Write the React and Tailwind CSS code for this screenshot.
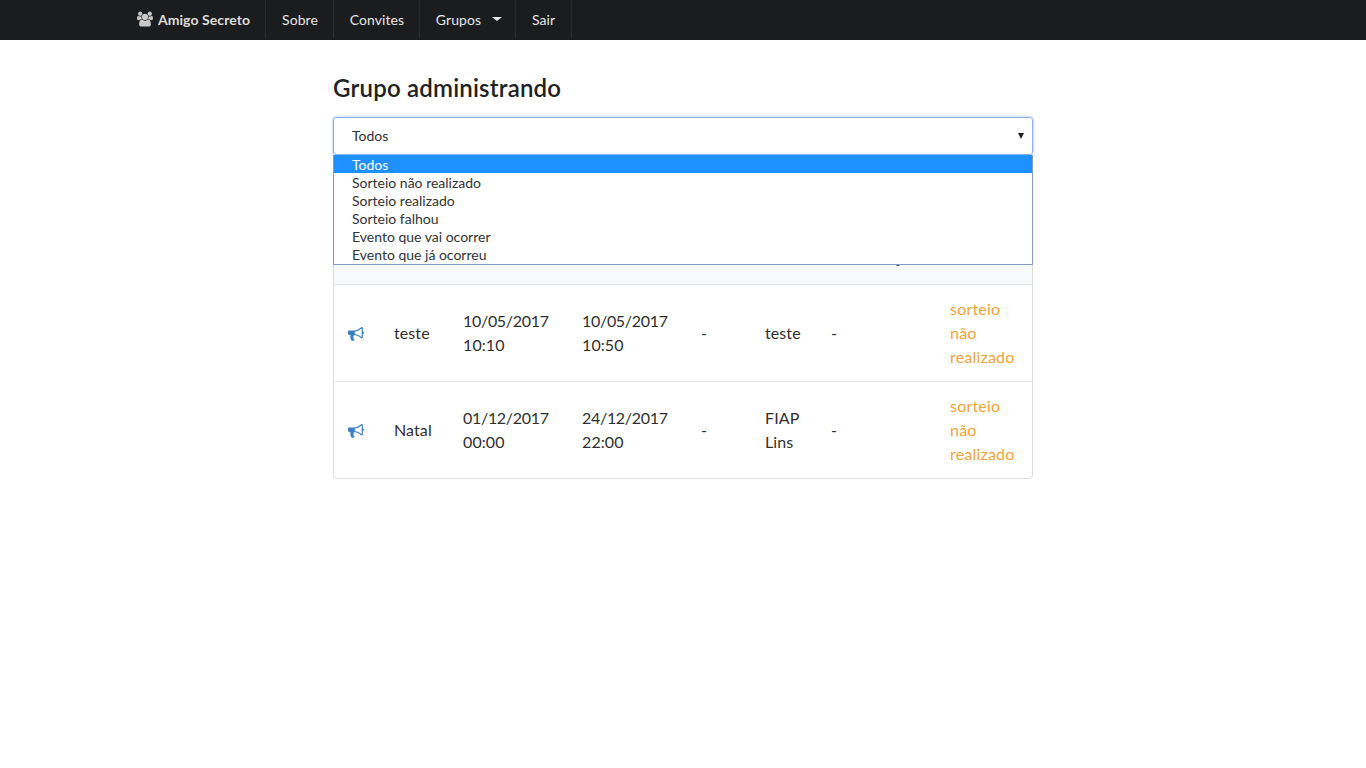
const navItems = [
    { label: 'Sobre', className: 'w-[68px] pl-[1px]' },
    { label: 'Convites', className: 'w-[86px] pl-[1px]' },
    { label: 'Grupos', className: 'w-[96px] pl-[3px]', caret: true },
    { label: 'Sair', className: 'w-[56px]' }
];

const options = [
    'Todos',
    'Sorteio não realizado',
    'Sorteio realizado',
    'Sorteio falhou',
    'Evento que vai ocorrer',
    'Evento que já ocorreu'
];

const grupos = [
    { nome: 'teste', inicio: ['10/05/2017', '10:10'], fim: ['10/05/2017', '10:50'], local: 'teste' },
    { nome: 'Natal', inicio: ['01/12/2017', '00:00'], fim: ['24/12/2017', '22:00'], local: 'FIAP Lins' }
];

function UsersIcon({ className }) {
    return (
        <svg viewBox="0 0 1920 1792" fill="currentColor" className={className}>
            <path d="M593 896q-162 5-265 128h-134q-82 0-138-40.5t-56-118.5q0-353 124-353 6 0 43.5 21t97.5 42.5 119 21.5q67 0 133-23-5 37-5 66 0 139 81 256zm1071 637q0 120-73 189.5t-194 69.5h-874q-121 0-194-69.5t-73-189.5q0-53 3.5-103.5t14-109 26.5-108.5 43-97.5 62-81 85.5-53.5 111.5-20q10 0 43 21.5t73 48 107 48 135 21.5 135-21.5 107-48 73-48 43-21.5q61 0 111.5 20t85.5 53.5 62 81 43 97.5 26.5 108.5 14 109 3.5 103.5zm-1024-1277q0 106-75 181t-181 75-181-75-75-181 75-181 181-75 181 75 75 181zm704 384q0 159-112.5 271.5t-271.5 112.5-271.5-112.5-112.5-271.5 112.5-271.5 271.5-112.5 271.5 112.5 112.5 271.5zm576 225q0 78-56 118.5t-138 40.5h-134q-103-123-265-128 81-117 81-256 0-29-5-66 66 23 133 23 59 0 119-21.5t97.5-42.5 43.5-21q124 0 124 353zm-128-609q0 106-75 181t-181 75-181-75-75-181 75-181 181-75 181 75 75 181z" />
        </svg>
    );
}

function BullhornIcon({ className }) {
    return (
        <svg viewBox="0 0 1792 1792" fill="currentColor" className={className}>
            <path d="M1664 736q53 0 90.5 37.5t37.5 90.5-37.5 90.5-90.5 37.5v384q0 52-38 90t-90 38q-417-347-812-380-58 19-91 66t-31 100.5 40 92.5q-20 33-23 65.5t6 58 33.5 55 48 50 61.5 50.5q-29 58-111.5 83t-168.5 11.5-132-55.5q-7-23-29.5-87.5t-32-94.5-23-89-15-101 3.5-98.5 22-110.5h-122q-66 0-113-47t-47-113v-192q0-66 47-113t113-47h480q435 0 896-384 52 0 90 38t38 90v384zm-128 604v-954q-394 302-768 343v270q377 42 768 341z" />
        </svg>
    );
}

function Navbar() {
    return (
        <nav className="h-10 bg-[#1b1c1e] pb-[2px] text-[14px] tracking-[0.08px] text-[#e6e6e6]">
            <div className="flex h-full pl-[121px]">
                <a className="flex w-[145px] items-center justify-center gap-[5px] border-r border-[#2b2c2e] pl-[1px] font-bold text-[#dddddd]">
                    <UsersIcon className="h-[16px] w-[16px] text-[#c8c8c8]" />
                    Amigo Secreto
                </a>
                {navItems.map((item) => (
                    <a key={item.label} className={`flex items-center justify-center border-r border-[#2b2c2e] ${item.className}`}>
                        {item.label}
                        {item.caret && <span className="ml-[11px] h-0 w-0 border-x-[5px] border-t-[4px] border-x-transparent border-t-[#e6e6e6]"></span>}
                    </a>
                ))}
            </div>
        </nav>
    );
}

function FiltroSelect() {
    return (
        <div className="relative mb-[15px]">
            <div className="flex h-[38px] items-center justify-between rounded-[3px] border border-[#8cb0e8] px-[18px] pb-[2px] text-[14px] text-[#333333] shadow-[0_0_3px_rgba(102,150,233,0.7)]">
                <span>Todos</span>
                <span className="-mr-[10px] mt-[2px] h-0 w-0 border-x-[3px] border-t-[6px] border-x-transparent border-t-[#222222]"></span>
            </div>
            <ul className="absolute left-0 right-0 top-[38px] z-10 h-[110px] border border-t-0 border-[#7f9dbf] bg-white text-[14px] text-[#333333]">
                {options.map((option, index) => (
                    <li key={option} className={index === 0 ? 'h-[18px] bg-[#1e90ff] pl-[18px] leading-[20px] text-white' : 'h-[18px] pl-[18px] leading-[20px]'}>{option}</li>
                ))}
            </ul>
        </div>
    );
}

function DataHora({ valor }) {
    return (
        <>
            <span className="tracking-[-0.3px]">{valor[0]}</span>
            <br />
            {valor[1]}
        </>
    );
}

function GruposTable() {
    return (
        <div className="rounded-[4px] border border-[#dddddd]">
            <table className="w-full table-fixed border-collapse text-[16px] leading-[24px] tracking-[0.1px] text-[#2f2f2f]">
                <colgroup>
                    <col className="w-[45px]" />
                    <col className="w-[69px]" />
                    <col className="w-[119px]" />
                    <col className="w-[119px]" />
                    <col className="w-[64px]" />
                    <col className="w-[66px]" />
                    <col className="w-[119px]" />
                    <col />
                </colgroup>
                <thead>
                    {/* the rest of the header sits behind the open dropdown */}
                    <tr className="h-[113px] bg-[#f7f9fb] text-left align-bottom font-bold">
                        <th></th>
                        <th></th>
                        <th></th>
                        <th></th>
                        <th></th>
                        <th></th>
                        <th className="overflow-hidden whitespace-nowrap pb-[15px] pl-[18px] text-[#1f4e79]">Minha loja</th>
                        <th></th>
                    </tr>
                </thead>
                <tbody>
                    {grupos.map((grupo) => (
                        <tr key={grupo.nome} className="border-t border-[#e4e4e4]">
                            <td className="px-[15px] py-[12px]"><BullhornIcon className="-ml-[1px] h-[16px] w-[16px] text-[#3a7fc4]" /></td>
                            <td className="px-[15px] py-[12px]">{grupo.nome}</td>
                            <td className="px-[15px] py-[12px]"><DataHora valor={grupo.inicio} /></td>
                            <td className="px-[15px] py-[12px]"><DataHora valor={grupo.fim} /></td>
                            <td className="px-[15px] py-[12px]">-</td>
                            <td className="px-[15px] py-[12px]">{grupo.local}</td>
                            <td className="px-[15px] py-[12px]">-</td>
                            <td className="px-[15px] py-[12px] tracking-[0.2px] text-[#f0a33c]">sorteio não realizado</td>
                        </tr>
                    ))}
                </tbody>
            </table>
        </div>
    );
}

export default function App() {
    return (
        <div className="min-h-screen bg-white font-['Lato',sans-serif]">
            <Navbar />
            <main className="mx-auto w-[700px] pt-[33px]">
                <h1 className="mb-[14px] text-[24px] font-semibold leading-[30px] tracking-[0.2px] text-[#222222]">Grupo administrando</h1>
                <FiltroSelect />
                <GruposTable />
            </main>
        </div>
    );
}
